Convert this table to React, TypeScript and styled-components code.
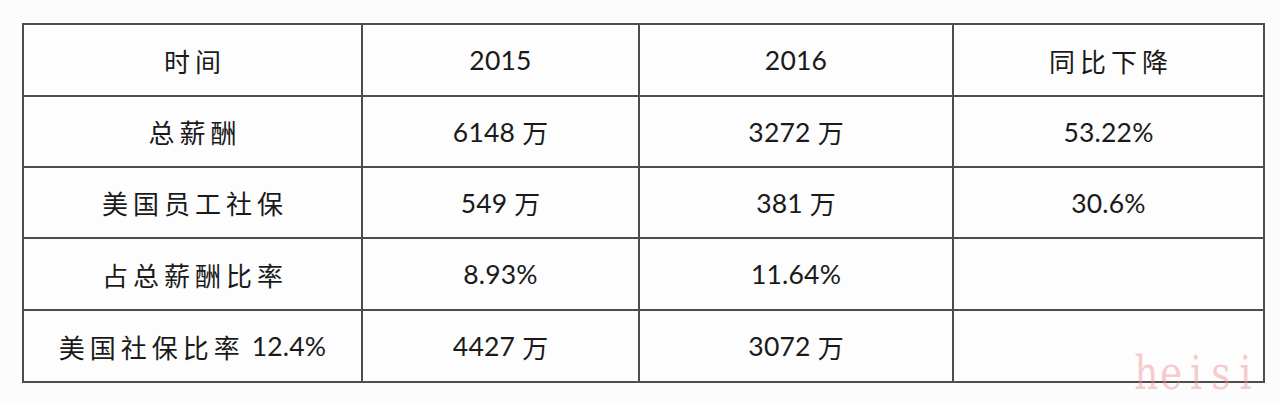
import React from 'react'
import styled, { createGlobalStyle } from 'styled-components'

const GlobalStyle = createGlobalStyle`
  html, body {
    margin: 0;
    padding: 0;
    background: #fcfcfc;
  }
`

const Page = styled.div`
  position: relative;
  width: 1280px;
  height: 402px;
  padding: 23px 0 0 22px;
  box-sizing: border-box;
  overflow: hidden;
`

const Grid = styled.div`
  display: grid;
  grid-template-columns: 337px 275px 312px 309px;
  grid-template-rows: 70px 69px 69px 70px 70px;
  gap: 2px;
  padding: 2px;
  width: max-content;
  background: #4d4d4d;
`

const Cell = styled.div`
  display: flex;
  align-items: center;
  justify-content: center;
  background: #fdfdfd;
  color: #1a1a1a;
  font-family: Lato, 'Noto Sans CJK SC', sans-serif;
  font-size: 26px;
  white-space: nowrap;
`

const Han = styled.span<{ $trail?: boolean }>`
  font-family: 'Noto Sans CJK SC', sans-serif;
  font-size: 26px;
  letter-spacing: 5px;
  margin-right: ${(p) => (p.$trail ? '7px' : '-5px')};
`

const Num = styled.span`
  font-family: Lato, sans-serif;
  font-size: 26.5px;
  letter-spacing: 0.2px;
`

const Unit = styled.span`
  font-family: 'Noto Sans CJK SC', sans-serif;
  font-size: 26px;
  margin-left: 7px;
`

const Watermark = styled.div`
  position: absolute;
  left: 1134px;
  top: 349px;
  display: flex;
  font-family: 'DejaVu Serif', serif;
  font-size: 47px;
  line-height: 47px;
  color: rgba(238, 140, 140, 0.45);
  transform: scaleX(0.8);
  transform-origin: left top;
  pointer-events: none;
`

const MarkChar = styled.span`
  display: inline-block;
  width: 31px;
  text-align: center;
`

type Value = { label?: string; num?: string; unit?: string }

const rows: Value[][] = [
  [{ label: '时间' }, { num: '2015' }, { num: '2016' }, { label: '同比下降' }],
  [{ label: '总薪酬' }, { num: '6148', unit: '万' }, { num: '3272', unit: '万' }, { num: '53.22%' }],
  [{ label: '美国员工社保' }, { num: '549', unit: '万' }, { num: '381', unit: '万' }, { num: '30.6%' }],
  [{ label: '占总薪酬比率' }, { num: '8.93%' }, { num: '11.64%' }, {}],
  [{ label: '美国社保比率', num: '12.4%' }, { num: '4427', unit: '万' }, { num: '3072', unit: '万' }, {}]
]

const App: React.FC = () => (
  <Page>
    <GlobalStyle />
    <Grid>
      {rows.map((row, r) =>
        row.map((v, c) => (
          <Cell key={`${r}-${c}`}>
            {v.label && <Han $trail={!!v.num}>{v.label}</Han>}
            {v.num && <Num>{v.num}</Num>}
            {v.unit && <Unit>{v.unit}</Unit>}
          </Cell>
        ))
      )}
    </Grid>
    <Watermark>
      {'heisi'.split('').map((ch, i) => (
        <MarkChar key={i}>{ch}</MarkChar>
      ))}
    </Watermark>
  </Page>
)

export default App
